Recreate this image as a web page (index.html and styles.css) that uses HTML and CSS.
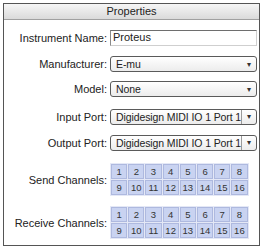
FILE: index.html
```html
<!DOCTYPE html>
<html lang="en">
<head>
    <meta charset="UTF-8">
    <title>Properties</title>
    <link rel="stylesheet" href="styles.css">
</head>
<body>
    <div class="panel">
        <div class="panel-title">Properties</div>

        <div class="form">
            <div class="row">
                <label class="label">Instrument Name:</label>
                <div class="text-field">Proteus</div>
            </div>

            <div class="row">
                <label class="label">Manufacturer:</label>
                <div class="select"><span class="value">E-mu</span><span class="arrow">&#9662;</span></div>
            </div>

            <div class="row tight">
                <label class="label">Model:</label>
                <div class="select"><span class="value">None</span><span class="arrow">&#9662;</span></div>
            </div>

            <div class="row loose">
                <label class="label">Input Port:</label>
                <div class="select split"><span class="value">Digidesign MIDI IO 1 Port 1</span><span class="arrow">&#9662;</span></div>
            </div>

            <div class="row">
                <label class="label">Output Port:</label>
                <div class="select split"><span class="value">Digidesign MIDI IO 1 Port 1</span><span class="arrow">&#9662;</span></div>
            </div>

            <div class="row loose">
                <label class="label">Send Channels:</label>
                <div class="channels" id="send"></div>
            </div>

            <div class="row">
                <label class="label">Receive Channels:</label>
                <div class="channels" id="receive"></div>
            </div>
        </div>
    </div>

    <script>
        // fill both channel grids with 1..16
        ['send', 'receive'].forEach(id => {
            const grid = document.getElementById(id);
            for (let i = 1; i <= 16; i++) {
                const cell = document.createElement('div');
                cell.className = 'channel';
                cell.textContent = i;
                grid.appendChild(cell);
            }
        });
    </script>
</body>
</html>
```

FILE: styles.css
```css
body {
    margin: 0;
    padding: 3px;
    background: #fff;
    font-family: "Liberation Sans", Arial, sans-serif;
    font-size: 11px;
    color: #222;
}

.panel {
    width: 257px;
    height: 243px;
    border: 1px solid #555;
    box-sizing: border-box;
}

.panel-title {
    height: 15px;
    line-height: 15px;
    text-align: center;
    background: linear-gradient(#f6f6f6, #dadada);
    border-bottom: 1px solid #a0a0a0;
    color: #222;
}

.form {
    display: flex;
    flex-direction: column;
    gap: 10px;
    padding-top: 10px;
}

.row {
    display: flex;
    align-items: center;
    gap: 3px;
}

.row.tight {
    margin-top: -1px;
}

.row.loose {
    margin-top: 2px;
}

.label {
    width: 103px;
    text-align: right;
    flex-shrink: 0;
}

.text-field {
    width: 147px;
    height: 16px;
    box-sizing: border-box;
    line-height: 13px;
    padding-left: 2px;
    background: #fff;
    border: 1px solid #cfcfcf;
    border-top-color: #6e6e6e;
    border-left-color: #8a8a8a;
}

.select {
    width: 147px;
    height: 16px;
    box-sizing: border-box;
    display: flex;
    align-items: center;
    border: 1px solid #5a5a5a;
    border-radius: 3px;
    background: linear-gradient(#ffffff, #ececec);
}

.select .value {
    flex: 1;
    padding-left: 5px;
    white-space: nowrap;
    overflow: hidden;
    font-size: 10.5px;
    letter-spacing: -0.1px;
}

.select .arrow {
    width: 14px;
    flex-shrink: 0;
    text-align: center;
    font-size: 8px;
    color: #333;
}

.select.split .arrow {
    border-left: 1px solid #9a9a9a;
    height: 14px;
    line-height: 14px;
}

.channels {
    display: grid;
    grid-template-columns: repeat(8, 16.2px);
    grid-auto-rows: 15px;
    gap: 1px;
    padding: 1px;
    background: #e4e8f6;
}

.channel {
    background: #c9d3f1;
    border: 1px solid #aeb9df;
    box-sizing: border-box;
    font-size: 9.5px;
    line-height: 13px;
    text-align: center;
    color: #333;
}
```
